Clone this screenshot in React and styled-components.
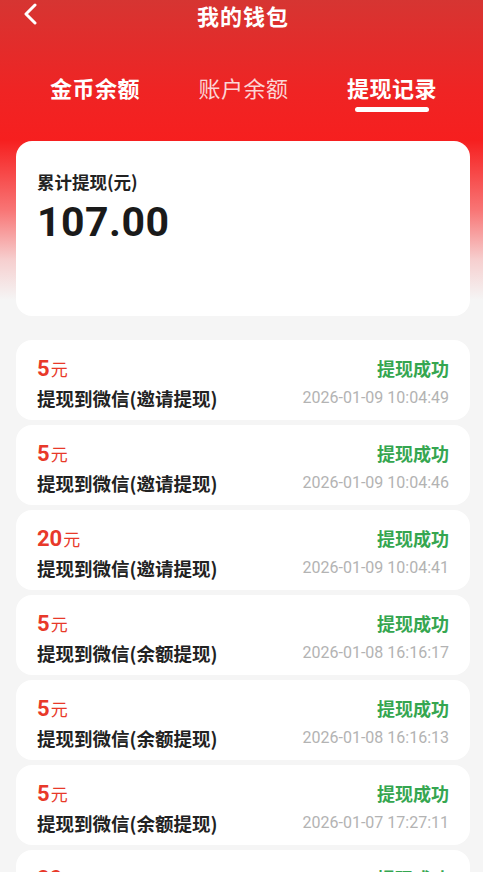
import React from "react";
import styled, { createGlobalStyle } from "styled-components";

const Global = createGlobalStyle`
  html, body { margin: 0; padding: 0; background: #f5f5f5; }
  body { font-family: "Noto Sans CJK SC", "Noto Sans", sans-serif; }
  * { box-sizing: border-box; }
`;

const Page = styled.div`
  width: 483px;
  height: 872px;
  background: linear-gradient(180deg, #d63532 0px, #ef2424 90px, #f61f1f 140px, #f87575 210px, #f6cfcf 260px, #f5f5f5 300px, #f5f5f5 100%);
  padding: 0 13px 0 16px;
  overflow: hidden;
`;

const Header = styled.div`
  height: 30px;
  display: flex;
  align-items: center;
  justify-content: center;
  position: relative;
`;

const Back = styled.div`
  position: absolute;
  left: 5px;
  top: 3px;
  width: 20px;
  height: 22px;
  display: flex;
`;

const Title = styled.div`
  color: #fff;
  font-size: 22px;
  font-weight: 700;
  letter-spacing: 1px;
  line-height: 28px;
`;

const Tabs = styled.div`
  display: flex;
  justify-content: space-between;
  padding: 0 33px 0 34px;
  margin-top: 41px;
  height: 70px;
`;

const Tab = styled.div`
  display: flex;
  flex-direction: column;
  align-items: center;
  color: ${(p) => (p.$dim ? "rgba(255,255,255,0.82)" : "#fff")};
  font-size: 22px;
  letter-spacing: 0.5px;
  font-weight: ${(p) => (p.$dim ? 400 : 700)};
  line-height: 32px;
`;

const Underline = styled.div`
  width: 74px;
  height: 5px;
  border-radius: 3px;
  background: ${(p) => (p.$show ? "#fff" : "transparent")};
  margin-top: 4px;
`;

const Summary = styled.div`
  background: #fff;
  border-radius: 16px;
  height: 175px;
  padding: 29px 21px;
`;

const SumLabel = styled.div`
  font-size: 17.5px;
  font-weight: 700;
  color: #222;
  line-height: 24px;
`;

const SumValue = styled.div`
  font-family: "Roboto", "Noto Sans", sans-serif;
  font-size: 41px;
  font-weight: 700;
  color: #1a1a1a;
  line-height: 48px;
  margin-top: 4px;
  letter-spacing: 0.5px;
`;

const List = styled.div`
  display: flex;
  flex-direction: column;
  gap: 5px;
  margin-top: 24px;
`;

const Item = styled.div`
  background: #fff;
  border-radius: 16px;
  height: 80px;
  padding: 11px 21px 0 21px;
  display: flex;
  flex-direction: column;
  gap: 2px;
`;

const Row = styled.div`
  display: flex;
  justify-content: space-between;
  align-items: center;
`;

const Amount = styled.div`
  color: #e8392a;
  line-height: 30px;
  margin-top: 3px;
`;

const AmountNum = styled.span`
  font-family: "Roboto", "Noto Sans", sans-serif;
  font-size: 22px;
  font-weight: 700;
`;

const AmountUnit = styled.span`
  font-size: 17px;
  margin-left: 1px;
`;

const Status = styled.div`
  color: #35a650;
  font-size: 18px;
  font-weight: 700;
  line-height: 28px;
`;

const Desc = styled.div`
  color: #222;
  font-size: 18.5px;
  font-weight: 700;
  line-height: 24px;
`;

const Time = styled.div`
  color: #b3b3b3;
  font-family: "Roboto", "Noto Sans", sans-serif;
  font-size: 16px;
  line-height: 24px;
`;

const records = [
  ["5", "提现到微信(邀请提现)", "2026-01-09 10:04:49"],
  ["5", "提现到微信(邀请提现)", "2026-01-09 10:04:46"],
  ["20", "提现到微信(邀请提现)", "2026-01-09 10:04:41"],
  ["5", "提现到微信(余额提现)", "2026-01-08 16:16:17"],
  ["5", "提现到微信(余额提现)", "2026-01-08 16:16:13"],
  ["5", "提现到微信(余额提现)", "2026-01-07 17:27:11"],
  ["20", "提现到微信(余额提现)", "2026-01-07 17:20:02"],
];

export default function App() {
  return (
    <Page>
      <Global />
      <Header>
        <Back>
          <svg width="20" height="22" viewBox="0 0 20 22" fill="none">
            <path d="M14 2 L5 11 L14 20" stroke="#fff" strokeWidth="3" strokeLinecap="round" strokeLinejoin="round" />
          </svg>
        </Back>
        <Title>我的钱包</Title>
      </Header>
      <Tabs>
        <Tab>
          金币余额
          <Underline />
        </Tab>
        <Tab $dim>
          账户余额
          <Underline />
        </Tab>
        <Tab>
          提现记录
          <Underline $show />
        </Tab>
      </Tabs>
      <Summary>
        <SumLabel>累计提现(元)</SumLabel>
        <SumValue>107.00</SumValue>
      </Summary>
      <List>
        {records.map((r, i) => (
          <Item key={i}>
            <Row>
              <Amount>
                <AmountNum>{r[0]}</AmountNum>
                <AmountUnit>元</AmountUnit>
              </Amount>
              <Status>提现成功</Status>
            </Row>
            <Row>
              <Desc>{r[1]}</Desc>
              <Time>{r[2]}</Time>
            </Row>
          </Item>
        ))}
      </List>
    </Page>
  );
}
